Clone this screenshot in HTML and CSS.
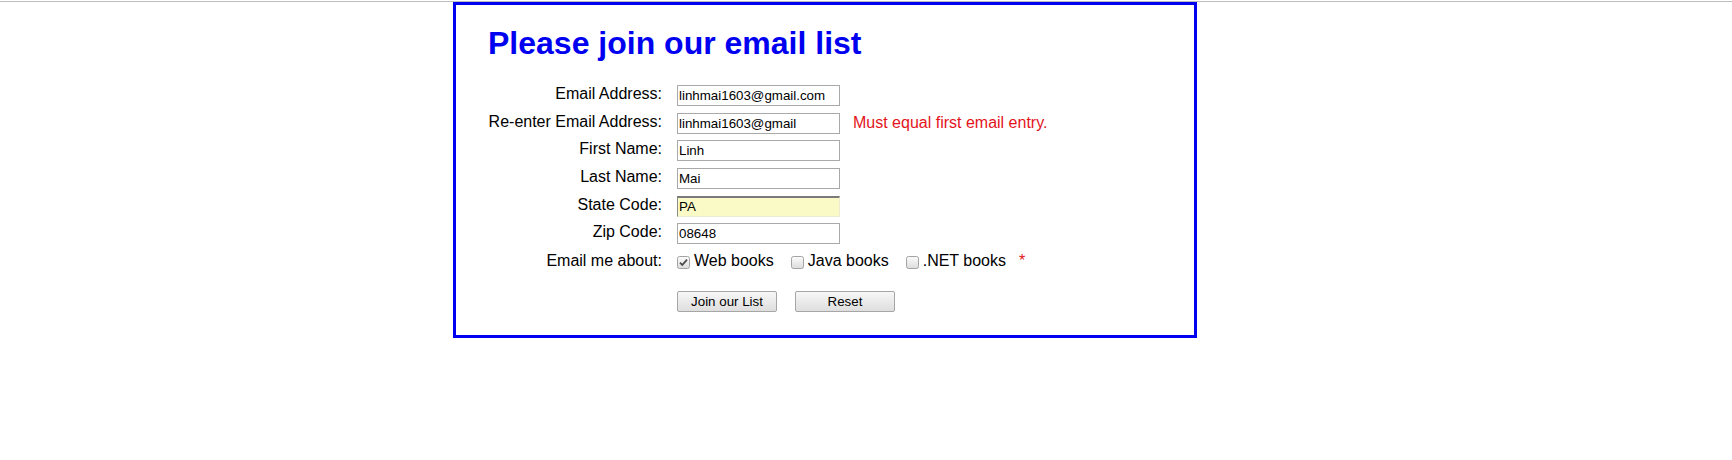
FILE: index.html
```html
<!DOCTYPE html>
<html lang="en">
<head>
<meta charset="utf-8">
<title>Join our email list</title>
<link rel="stylesheet" href="styles.css">
</head>
<body>
<div class="topline"></div>
<main class="box">
  <h1 class="title">Please join our email list</h1>
  <form class="form">
    <div class="row">
      <label class="lbl">Email Address:</label>
      <input class="field" type="text" value="linhmai1603@gmail.com">
    </div>
    <div class="row">
      <label class="lbl">Re-enter Email Address:</label>
      <input class="field" type="text" value="linhmai1603@gmail">
      <span class="error">Must equal first email entry.</span>
    </div>
    <div class="row">
      <label class="lbl">First Name:</label>
      <input class="field" type="text" value="Linh">
    </div>
    <div class="row">
      <label class="lbl">Last Name:</label>
      <input class="field" type="text" value="Mai">
    </div>
    <div class="row">
      <label class="lbl">State Code:</label>
      <input class="field field-auto" type="text" value="PA">
    </div>
    <div class="row">
      <label class="lbl">Zip Code:</label>
      <input class="field" type="text" value="08648">
    </div>
    <div class="row row-check">
      <label class="lbl">Email me about:</label>
      <div class="options">
        <span class="opt">
          <svg class="cb" width="13" height="13" viewBox="0 0 13 13">
            <defs><linearGradient id="g1" x1="0" y1="0" x2="0" y2="1"><stop offset="0" stop-color="#fcfcfc"/><stop offset="1" stop-color="#dcdcdc"/></linearGradient></defs>
            <rect x="0.5" y="0.5" width="12" height="12" rx="2" fill="url(#g1)" stroke="#a3a3a3"/>
            <path d="M3 6.6 L5.3 9 L10 3.6" fill="none" stroke="#4a4a4a" stroke-width="1.8"/>
          </svg>
          <span class="opt-text">Web books</span>
        </span>
        <span class="opt">
          <svg class="cb" width="13" height="13" viewBox="0 0 13 13">
            <rect x="0.5" y="0.5" width="12" height="12" rx="2" fill="url(#g1)" stroke="#a3a3a3"/>
          </svg>
          <span class="opt-text">Java books</span>
        </span>
        <span class="opt">
          <svg class="cb" width="13" height="13" viewBox="0 0 13 13">
            <rect x="0.5" y="0.5" width="12" height="12" rx="2" fill="url(#g1)" stroke="#a3a3a3"/>
          </svg>
          <span class="opt-text">.NET books</span>
        </span>
        <span class="req">*</span>
      </div>
    </div>
    <div class="buttons">
      <button class="btn" type="button">Join our List</button>
      <button class="btn" type="reset">Reset</button>
    </div>
  </form>
</main>
</body>
</html>
```

FILE: styles.css
```css
html, body {
  margin: 0;
  padding: 0;
  background: #ffffff;
}

body {
  font-family: "Liberation Sans", Arial, sans-serif;
  font-size: 16px;
  color: #000;
}

.topline {
  height: 1px;
  margin-top: 1px;
  background: #bdbdbd;
}

.box {
  box-sizing: border-box;
  width: 744px;
  margin-left: 453px;
  border: 3px solid #0000f0;
  padding: 20px 32px 23px 32px;
}

.title {
  margin: 0 0 23px 0;
  font-size: 32px;
  line-height: 37px;
  font-weight: bold;
  color: #0000f0;
}

.form {
  display: flex;
  flex-direction: column;
}

.row {
  display: flex;
  align-items: flex-start;
  height: 21px;
  margin-bottom: 6.67px;
}

.row-check {
  margin-top: 1px;
}

.lbl {
  width: 174px;
  flex: none;
  text-align: right;
  white-space: nowrap;
  line-height: 18.4px;
  margin-right: 15px;
}

.field {
  box-sizing: border-box;
  width: 163px;
  height: 21px;
  margin: 0;
  padding: 0 1px;
  border: 1px solid #a9a9a9;
  font-family: "Liberation Sans", Arial, sans-serif;
  font-size: 13.33px;
  color: #000;
  background: #fff;
  outline: none;
}

.field-auto {
  background: #fafac6;
  border-top: 2px solid #7a7a7a;
  border-left: 1px solid #8a8a8a;
  border-right: 1px solid #ececd4;
  border-bottom: 1px solid #ececd4;
}

.error {
  margin-left: 13px;
  color: #e3141c;
  line-height: 19px;
  white-space: nowrap;
}

.options {
  display: flex;
  align-items: flex-start;
  line-height: 18.4px;
}

.opt {
  display: flex;
  align-items: flex-start;
  margin-right: 17px;
}

.opt:nth-child(3) {
  margin-right: 13px;
}

.cb {
  display: block;
  flex: none;
  margin-top: 4px;
  margin-right: 4px;
}

.opt-text {
  white-space: nowrap;
}

.req {
  color: #e3141c;
}

.buttons {
  display: flex;
  gap: 18px;
  margin-left: 189px;
  margin-top: 11px;
}

.btn {
  box-sizing: border-box;
  width: 100px;
  height: 21px;
  margin: 0;
  padding: 0;
  border: 1px solid #a6a6a6;
  border-radius: 2px;
  background: linear-gradient(#f7f7f7, #dedede);
  font-family: "Liberation Sans", Arial, sans-serif;
  font-size: 13.33px;
  color: #000;
}
```
